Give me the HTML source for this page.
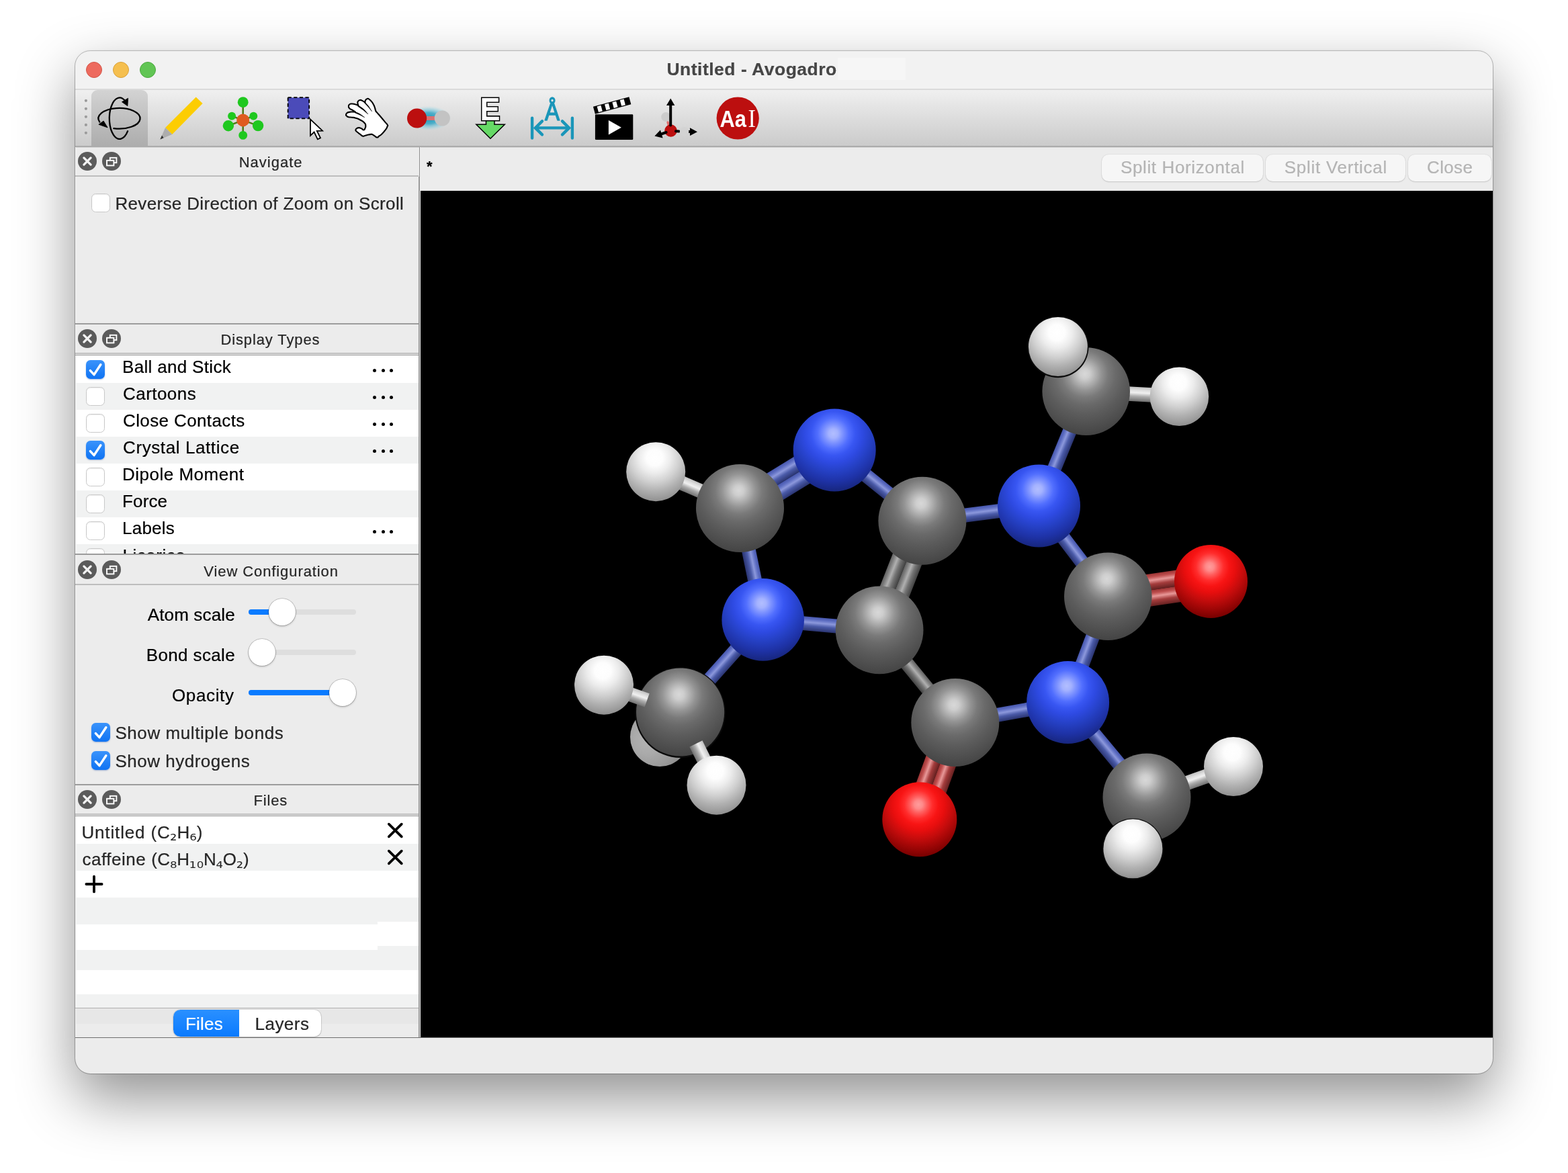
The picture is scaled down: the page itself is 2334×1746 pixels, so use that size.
<!DOCTYPE html>
<html lang="en"><head><meta charset="utf-8"><title>Untitled - Avogadro</title>
<style>
html,body{margin:0;padding:0;background:#fff;}
@media (max-width:1400px) and (min-resolution:1.5dppx){html{zoom:0.5;}}
body{width:2334px;height:1746px;position:relative;overflow:hidden;font-family:"Liberation Sans",sans-serif;}
.abs,.gl,.t,.b{position:absolute;}
svg.abs{will-change:opacity;}
.t{white-space:nowrap;will-change:opacity;-webkit-text-stroke:0.22px currentColor;}
.sb{font-family:"DejaVu Sans","Liberation Sans",sans-serif;font-size:1.0em;position:relative;top:0.13em;margin:0 -0.03em;-webkit-text-stroke:0;}
#win{position:absolute;left:112px;top:75px;width:2110px;height:1523px;border-radius:23px;background:#ececec;
 box-shadow:0 36px 86px 0 rgba(0,0,0,0.44),0 0 3px 0 rgba(0,0,0,0.08);overflow:hidden;}
#ring{position:absolute;left:111px;top:75px;width:2111.5px;height:1523.5px;border-radius:23.5px;box-sizing:border-box;border:1px solid rgba(0,0,0,0.24);}
#win>*{position:absolute;}
#tb{left:0;top:0;width:2110px;height:57px;background:#f2f2f2;border-bottom:2px solid #dadada;}
#tool{left:0;top:59px;width:2110px;height:82.5px;background:linear-gradient(#f0f0f0 0%,#dddddd 50%,#cbcbcb 100%);border-bottom:2px solid #ababab;box-shadow:0 1px 0 #d6d6d6;}
#sel{left:24px;top:59px;width:84px;height:82.5px;border-radius:9px 9px 0 0;background:linear-gradient(#d3d3d3 0%,#c4c4c4 40%,#b4b4b4 80%,#adadad 100%);}
.tl{width:24px;height:24px;border-radius:50%;top:17px;box-sizing:border-box;}
.ln{background:#b4b4b4;}
.hd{left:0;width:511px;background:#ececec;}
.cb{width:28px;height:28px;box-sizing:border-box;border-radius:6.5px;}
.cb.off{background:#fff;border:1px solid #c9c9c9;box-shadow:inset 0 1px 1.5px rgba(0,0,0,0.08);}
.cb.on{background:linear-gradient(#3a93fb,#0f73f3);box-shadow:0 1px 2px rgba(0,60,160,0.35);}
.row{left:2px;width:508px;height:40px;}
.row.a{background:#ffffff;}
.row.b{background:#f1f2f2;}
.trk{height:8px;border-radius:4px;background:#dedede;}
.trk.f{background:#0a7bff;}
.knob{width:40px;height:40px;border-radius:50%;background:#fff;box-shadow:0 0 0 0.8px rgba(0,0,0,0.22),0 1.5px 3px rgba(0,0,0,0.22);}
.btn{top:154.5px;height:40px;border-radius:10.5px;background:#f6f6f6;box-shadow:0 0 0 1px rgba(0,0,0,0.035),0 1px 2px rgba(0,0,0,0.13);}
</style></head><body>
<div id="win"><div id="tb"></div>
<div class="tl" style="left:16px;background:#ed6a5e;border:1px solid #d25548"></div>
<div class="tl" style="left:56px;background:#f5bf4f;border:1px solid #d8a03a"></div>
<div class="tl" style="left:96px;background:#61c554;border:1px solid #4ca83f"></div>
<div style="left:1134.7px;top:11px;width:101px;height:33px;background:#f6f6f6"></div>
<div id="tool"></div><div id="sel"></div>
<div class="btn" style="left:1527.6px;width:240.4px"></div>
<div class="btn" style="left:1772px;width:208px"></div>
<div class="btn" style="left:1984px;width:123.6px"></div>
<div style="left:511px;top:188px;width:2px;height:1281.5px;background:#999999"></div>
<div style="left:511.8px;top:143.5px;width:1.2px;height:45px;background:#8f8f8f"></div>
<div style="left:0px;top:143.5px;width:1.2px;height:1326px;background:#f6f6f6"></div>
<div style="left:512.6px;top:143.5px;width:1.6px;height:65px;background:#f4f4f4"></div>
<svg class="abs" style="left:3px;top:150px" width="72" height="30" viewBox="0 0 72 30">
<circle cx="15" cy="15" r="14" fill="#5b5b5b"/><path d="M9.9 9.9 L20.1 20.1 M20.1 9.9 L9.9 20.1" stroke="#f4f4f4" stroke-width="3.3" stroke-linecap="round"/>
<circle cx="51" cy="15" r="14" fill="#5b5b5b"/>
<rect x="48.8" y="9.8" width="9.6" height="7.4" fill="none" stroke="#fff" stroke-width="1.9"/>
<rect x="44" y="13.8" width="10.4" height="7.6" fill="#5b5b5b" stroke="#fff" stroke-width="1.9"/></svg>
<div class="ln" style="left:0px;top:186px;width:511px;height:2px;background:#bdbdbd"></div>
<div class="cb off" style="left:24.099999999999994px;top:213.10000000000002px"></div>
<div class="ln" style="left:0px;top:406px;width:511px;height:2px;background:#9c9c9c"></div>
<svg class="abs" style="left:3px;top:414px" width="72" height="30" viewBox="0 0 72 30">
<circle cx="15" cy="15" r="14" fill="#5b5b5b"/><path d="M9.9 9.9 L20.1 20.1 M20.1 9.9 L9.9 20.1" stroke="#f4f4f4" stroke-width="3.3" stroke-linecap="round"/>
<circle cx="51" cy="15" r="14" fill="#5b5b5b"/>
<rect x="48.8" y="9.8" width="9.6" height="7.4" fill="none" stroke="#fff" stroke-width="1.9"/>
<rect x="44" y="13.8" width="10.4" height="7.6" fill="#5b5b5b" stroke="#fff" stroke-width="1.9"/></svg>
<div class="ln" style="left:0px;top:450px;width:511px;height:2px;background:#bdbdbd"></div>
<div style="left:1px;top:454px;width:510px;height:295px;background:#fff;overflow:hidden">
<div class="row a" style="position:absolute;left:0;top:1px;width:510px"></div>
<div class="row b" style="position:absolute;left:0;top:41px;width:510px"></div>
<div class="row a" style="position:absolute;left:0;top:81px;width:510px"></div>
<div class="row b" style="position:absolute;left:0;top:121px;width:510px"></div>
<div class="row a" style="position:absolute;left:0;top:161px;width:510px"></div>
<div class="row b" style="position:absolute;left:0;top:201px;width:510px"></div>
<div class="row a" style="position:absolute;left:0;top:241px;width:510px"></div>
<div class="row b" style="position:absolute;left:0;top:281px;width:510px"></div>
</div>
<div style="left:0px;top:452px;width:511px;height:1px;background:#f4f4f4"></div><div style="left:0px;top:453px;width:511px;height:1px;background:#909090"></div>
<div class="cb on" style="left:16px;top:461px"><svg width="28" height="28" viewBox="0 0 28 28" style="display:block"><path d="M6.4 15.6 L12 21.6 L21.8 6.8" fill="none" stroke="#fff" stroke-width="3.5" stroke-linecap="round" stroke-linejoin="round"/></svg></div>
<div style="left:443.29999999999995px;top:473.79999999999995px;width:5px;height:5px;border-radius:50%;background:#000"></div>
<div style="left:455.5px;top:473.79999999999995px;width:5px;height:5px;border-radius:50%;background:#000"></div>
<div style="left:467.70000000000005px;top:473.79999999999995px;width:5px;height:5px;border-radius:50%;background:#000"></div>
<div class="cb off" style="left:16px;top:501px"></div>
<div style="left:443.29999999999995px;top:513.8px;width:5px;height:5px;border-radius:50%;background:#000"></div>
<div style="left:455.5px;top:513.8px;width:5px;height:5px;border-radius:50%;background:#000"></div>
<div style="left:467.70000000000005px;top:513.8px;width:5px;height:5px;border-radius:50%;background:#000"></div>
<div class="cb off" style="left:16px;top:541px"></div>
<div style="left:443.29999999999995px;top:553.8px;width:5px;height:5px;border-radius:50%;background:#000"></div>
<div style="left:455.5px;top:553.8px;width:5px;height:5px;border-radius:50%;background:#000"></div>
<div style="left:467.70000000000005px;top:553.8px;width:5px;height:5px;border-radius:50%;background:#000"></div>
<div class="cb on" style="left:16px;top:581px"><svg width="28" height="28" viewBox="0 0 28 28" style="display:block"><path d="M6.4 15.6 L12 21.6 L21.8 6.8" fill="none" stroke="#fff" stroke-width="3.5" stroke-linecap="round" stroke-linejoin="round"/></svg></div>
<div style="left:443.29999999999995px;top:593.8px;width:5px;height:5px;border-radius:50%;background:#000"></div>
<div style="left:455.5px;top:593.8px;width:5px;height:5px;border-radius:50%;background:#000"></div>
<div style="left:467.70000000000005px;top:593.8px;width:5px;height:5px;border-radius:50%;background:#000"></div>
<div class="cb off" style="left:16px;top:621px"></div>
<div class="cb off" style="left:16px;top:661px"></div>
<div class="cb off" style="left:16px;top:701px"></div>
<div style="left:443.29999999999995px;top:713.8px;width:5px;height:5px;border-radius:50%;background:#000"></div>
<div style="left:455.5px;top:713.8px;width:5px;height:5px;border-radius:50%;background:#000"></div>
<div style="left:467.70000000000005px;top:713.8px;width:5px;height:5px;border-radius:50%;background:#000"></div>
<div style="left:16px;top:741px;width:28px;height:8.2px;overflow:hidden"><div class="cb off" style="position:absolute;left:0;top:0"></div></div>
<div style="left:60px;top:735px;width:200px;height:14.2px;overflow:hidden"><div class="t" id="r8" style="left:10.4px;top:3.6px;font-size:26px;line-height:26px;color:#000;letter-spacing:0.55px">Licorice</div></div>
<div class="ln" style="left:0px;top:749px;width:511px;height:2px;background:#9c9c9c"></div>
<svg class="abs" style="left:3px;top:758px" width="72" height="30" viewBox="0 0 72 30">
<circle cx="15" cy="15" r="14" fill="#5b5b5b"/><path d="M9.9 9.9 L20.1 20.1 M20.1 9.9 L9.9 20.1" stroke="#f4f4f4" stroke-width="3.3" stroke-linecap="round"/>
<circle cx="51" cy="15" r="14" fill="#5b5b5b"/>
<rect x="48.8" y="9.8" width="9.6" height="7.4" fill="none" stroke="#fff" stroke-width="1.9"/>
<rect x="44" y="13.8" width="10.4" height="7.6" fill="#5b5b5b" stroke="#fff" stroke-width="1.9"/></svg>
<div class="ln" style="left:0px;top:794px;width:511px;height:2px;background:#bdbdbd"></div>
<div class="trk" style="left:257.8px;top:832px;width:160.4px"></div>
<div class="trk f" style="left:257.8px;top:832px;width:50.0px"></div>
<div class="knob" style="left:287.8px;top:816px"></div>
<div class="trk" style="left:257.8px;top:892px;width:160.4px"></div>
<div class="knob" style="left:257.8px;top:876px"></div>
<div class="trk" style="left:257.8px;top:952px;width:160.4px"></div>
<div class="trk f" style="left:257.8px;top:952px;width:140.4px"></div>
<div class="knob" style="left:378.2px;top:936px"></div>
<div class="cb on" style="left:24.099999999999994px;top:1001.2px"><svg width="28" height="28" viewBox="0 0 28 28" style="display:block"><path d="M6.4 15.6 L12 21.6 L21.8 6.8" fill="none" stroke="#fff" stroke-width="3.5" stroke-linecap="round" stroke-linejoin="round"/></svg></div>
<div class="cb on" style="left:24.099999999999994px;top:1043.3px"><svg width="28" height="28" viewBox="0 0 28 28" style="display:block"><path d="M6.4 15.6 L12 21.6 L21.8 6.8" fill="none" stroke="#fff" stroke-width="3.5" stroke-linecap="round" stroke-linejoin="round"/></svg></div>
<div class="ln" style="left:0px;top:1092px;width:511px;height:2px;background:#9c9c9c"></div>
<svg class="abs" style="left:3px;top:1100px" width="72" height="30" viewBox="0 0 72 30">
<circle cx="15" cy="15" r="14" fill="#5b5b5b"/><path d="M9.9 9.9 L20.1 20.1 M20.1 9.9 L9.9 20.1" stroke="#f4f4f4" stroke-width="3.3" stroke-linecap="round"/>
<circle cx="51" cy="15" r="14" fill="#5b5b5b"/>
<rect x="48.8" y="9.8" width="9.6" height="7.4" fill="none" stroke="#fff" stroke-width="1.9"/>
<rect x="44" y="13.8" width="10.4" height="7.6" fill="#5b5b5b" stroke="#fff" stroke-width="1.9"/></svg>
<div class="ln" style="left:0px;top:1136px;width:511px;height:2px;background:#bdbdbd"></div>
<div style="left:1px;top:1140px;width:510px;height:285.4px;background:#fff;overflow:hidden">
<div class="row a" style="position:absolute;left:0;top:0.0px;width:510px;height:41.0px"></div>
<div class="row b" style="position:absolute;left:0;top:41.0px;width:510px;height:40.0px"></div>
<div class="row a" style="position:absolute;left:0;top:81.0px;width:510px;height:40.0px"></div>
<div class="row b" style="position:absolute;left:0;top:121.0px;width:510px;height:40.0px"></div>
<div class="row a" style="position:absolute;left:0;top:161.0px;width:510px;height:38.0px"></div>
<div class="row b" style="position:absolute;left:0;top:199.0px;width:510px;height:30.0px"></div>
<div class="row a" style="position:absolute;left:0;top:229.0px;width:510px;height:36.0px"></div>
<div class="row b" style="position:absolute;left:0;top:265.0px;width:510px;height:21.0px"></div>
<div style="position:absolute;left:449px;top:157.0px;width:61px;height:36px;background:#fff"></div>
<div style="position:absolute;left:449px;top:193.0px;width:61px;height:6px;background:#f1f2f2"></div>
</div>
<div style="left:0px;top:1138px;width:511px;height:1px;background:#f4f4f4"></div><div style="left:0px;top:1139px;width:511px;height:1px;background:#909090"></div>
<svg class="abs" style="left:462.79999999999995px;top:1148.3px" width="27" height="26" viewBox="0 0 27 26"><path d="M3.8 3.6 L22.8 22.4 M22.8 3.6 L3.8 22.4" stroke="#000" stroke-width="3.7" stroke-linecap="round"/></svg>
<svg class="abs" style="left:462.79999999999995px;top:1188.3px" width="27" height="26" viewBox="0 0 27 26"><path d="M3.8 3.6 L22.8 22.4 M22.8 3.6 L3.8 22.4" stroke="#000" stroke-width="3.7" stroke-linecap="round"/></svg>
<svg class="abs" style="left:13.300000000000011px;top:1226.4px" width="30" height="30" viewBox="0 0 30 30"><path d="M3.4 15 L26.6 15 M15 3.6 L15 26.4" stroke="#000" stroke-width="3.8" stroke-linecap="round"/></svg>
<div class="ln" style="left:0px;top:1425.2px;width:511px;height:1.2px;background:#b0b0b0"></div>
<div style="left:1px;top:1426.4px;width:510px;height:23px;background:#e7e7e7"></div>
<div style="left:146.2px;top:1428px;width:220.2px;height:40px;border-radius:10.5px;background:#fff;box-shadow:0 0 0 0.8px rgba(0,0,0,0.1),0 1px 2px rgba(0,0,0,0.2)"></div>
<div style="left:146.2px;top:1428px;width:97.8px;height:40px;border-radius:10.5px 0 0 10.5px;background:linear-gradient(#2a90ff,#0a7aff)"></div>
<div style="left:0;top:1469px;width:2110px;height:1px;background:#6e6e6e"></div></div>
<svg class="gl" style="left:626px;top:284px" width="1596" height="1260" viewBox="626 284 1596 1260">
<defs><radialGradient id="gC" cx="0.485" cy="0.3" r="0.7" fx="0.485" fy="0.3"><stop offset="0" stop-color="#d8d8d8"/><stop offset="0.08" stop-color="#cecece"/><stop offset="0.16" stop-color="#b6b6b6"/><stop offset="0.27" stop-color="#949494"/><stop offset="0.38" stop-color="#7a7a7a"/><stop offset="0.5" stop-color="#6a6a6a"/><stop offset="0.66" stop-color="#5c5c5c"/><stop offset="0.83" stop-color="#505050"/><stop offset="1" stop-color="#444444"/></radialGradient><radialGradient id="gN" cx="0.485" cy="0.3" r="0.7" fx="0.485" fy="0.3"><stop offset="0" stop-color="#b2beff"/><stop offset="0.08" stop-color="#a4b2ff"/><stop offset="0.16" stop-color="#7f94ff"/><stop offset="0.27" stop-color="#516efe"/><stop offset="0.38" stop-color="#3856f2"/><stop offset="0.5" stop-color="#2e4ae2"/><stop offset="0.66" stop-color="#2540c4"/><stop offset="0.83" stop-color="#1e32a6"/><stop offset="1" stop-color="#17267e"/></radialGradient><radialGradient id="gO" cx="0.485" cy="0.3" r="0.7" fx="0.485" fy="0.3"><stop offset="0" stop-color="#ff9c9c"/><stop offset="0.08" stop-color="#ff8a8a"/><stop offset="0.16" stop-color="#ff5e5e"/><stop offset="0.27" stop-color="#ff2c2c"/><stop offset="0.38" stop-color="#f81414"/><stop offset="0.5" stop-color="#e80e0e"/><stop offset="0.66" stop-color="#c40c0c"/><stop offset="0.83" stop-color="#9e0606"/><stop offset="1" stop-color="#780000"/></radialGradient><radialGradient id="gH" cx="0.48" cy="0.26" r="0.76" fx="0.48" fy="0.26"><stop offset="0" stop-color="#ffffff"/><stop offset="0.18" stop-color="#fdfdfd"/><stop offset="0.35" stop-color="#ececec"/><stop offset="0.55" stop-color="#d0d0d0"/><stop offset="0.75" stop-color="#b0b0b0"/><stop offset="0.92" stop-color="#989898"/><stop offset="1" stop-color="#8a8a8a"/></radialGradient><radialGradient id="gHd" cx="0.3" cy="0.55" r="0.8" fx="0.3" fy="0.55"><stop offset="0" stop-color="#b4b4b4"/><stop offset="0.3" stop-color="#aaaaaa"/><stop offset="0.6" stop-color="#9a9a9a"/><stop offset="0.88" stop-color="#868686"/><stop offset="1" stop-color="#787878"/></radialGradient><linearGradient id="bb" x1="0" y1="0" x2="0" y2="1"><stop offset="0" stop-color="#4656ac"/><stop offset="0.2" stop-color="#6070c4"/><stop offset="0.4" stop-color="#8c98dc"/><stop offset="0.65" stop-color="#4a5aa8"/><stop offset="1" stop-color="#2a3470"/></linearGradient><linearGradient id="br" x1="0" y1="0" x2="0" y2="1"><stop offset="0" stop-color="#9c3434"/><stop offset="0.2" stop-color="#c05050"/><stop offset="0.4" stop-color="#e89898"/><stop offset="0.65" stop-color="#a43c3c"/><stop offset="1" stop-color="#642020"/></linearGradient><linearGradient id="bg" x1="0" y1="0" x2="0" y2="1"><stop offset="0" stop-color="#606060"/><stop offset="0.2" stop-color="#848484"/><stop offset="0.4" stop-color="#b0b0b0"/><stop offset="0.65" stop-color="#747474"/><stop offset="1" stop-color="#424242"/></linearGradient><linearGradient id="bw" x1="0" y1="0" x2="0" y2="1"><stop offset="0" stop-color="#bebebe"/><stop offset="0.2" stop-color="#dcdcdc"/><stop offset="0.4" stop-color="#f0f0f0"/><stop offset="0.65" stop-color="#acacac"/><stop offset="1" stop-color="#707070"/></linearGradient></defs>
<rect x="626" y="284" width="1596" height="1260" fill="#000"/>
<g transform="translate(976.2,702.2) rotate(23.39)"><rect x="26.4" y="-10.7" width="70.8" height="21.4" fill="url(#bw)"/></g>
<g transform="translate(1101.5,756.4) rotate(-31.58)"><rect x="39.3" y="-23.2" width="89.0" height="23.2" fill="url(#bb)"/><rect x="39.3" y="0.0" width="89.0" height="23.2" fill="url(#bb)"/></g>
<g transform="translate(1242.2,669.9) rotate(38.88)"><rect x="36.9" y="-10.5" width="91.7" height="21" fill="url(#bb)"/></g>
<g transform="translate(1372.9,775.3) rotate(111.44) scale(1,-1)"><rect x="39.3" y="-23.2" width="96.0" height="23.2" fill="url(#bg)"/><rect x="39.3" y="0.0" width="96.0" height="23.2" fill="url(#bg)"/></g>
<g transform="translate(1372.9,775.3) rotate(-7.35)"><rect x="39.3" y="-10.5" width="98.8" height="21" fill="url(#bb)"/></g>
<g transform="translate(1546.5,752.9) rotate(-67.60)"><rect x="36.9" y="-10.5" width="108.1" height="21" fill="url(#bb)"/></g>
<g transform="translate(1546.5,752.9) rotate(52.67)"><rect x="36.9" y="-10.5" width="93.4" height="21" fill="url(#bb)"/></g>
<g transform="translate(1649.3,887.7) rotate(-8.28)"><rect x="39.2" y="-24.0" width="82.9" height="24" fill="url(#br)"/><rect x="39.2" y="0.0" width="82.9" height="24" fill="url(#br)"/></g>
<g transform="translate(1649.3,887.7) rotate(110.72) scale(1,-1)"><rect x="39.2" y="-10.5" width="92.6" height="21" fill="url(#bb)"/></g>
<g transform="translate(1589.6,1045.5) rotate(169.86) scale(1,-1)"><rect x="36.9" y="-10.5" width="94.3" height="21" fill="url(#bb)"/></g>
<g transform="translate(1589.6,1045.5) rotate(50.32)"><rect x="36.9" y="-10.5" width="107.7" height="21" fill="url(#bb)"/></g>
<g transform="translate(1421.8,1075.5) rotate(110.17) scale(1,-1)"><rect x="39.3" y="-23.6" width="81.1" height="23.6" fill="url(#br)"/><rect x="39.3" y="0.0" width="81.1" height="23.6" fill="url(#br)"/></g>
<g transform="translate(1421.8,1075.5) rotate(-129.30) scale(1,-1)"><rect x="39.3" y="-10.5" width="99.4" height="21" fill="url(#bg)"/></g>
<g transform="translate(1309.1,937.8) rotate(-174.92) scale(1,-1)"><rect x="39.2" y="-10.5" width="98.1" height="21" fill="url(#bb)"/></g>
<g transform="translate(1135.7,922.4) rotate(-101.64) scale(1,-1)"><rect x="36.8" y="-10.5" width="93.4" height="21" fill="url(#bb)"/></g>
<g transform="translate(1135.7,922.4) rotate(131.82) scale(1,-1)"><rect x="36.8" y="-10.5" width="108.5" height="21" fill="url(#bb)"/></g>
<g transform="translate(1616.7,582.6) rotate(3.14)"><rect x="39.2" y="-10.7" width="73.4" height="21.4" fill="url(#bw)"/></g>
<g transform="translate(1707.0,1187.0) rotate(-19.63)"><rect x="39.3" y="-10.7" width="71.3" height="21.4" fill="url(#bw)"/></g>
<circle cx="982.0" cy="1097.0" r="44.0" fill="url(#gHd)"/>
<circle cx="976.2" cy="702.2" r="44.0" fill="url(#gH)"/>
<circle cx="1101.5" cy="756.4" r="65.5" fill="url(#gC)"/>
<circle cx="1242.2" cy="669.9" r="61.5" fill="url(#gN)"/>
<circle cx="1372.9" cy="775.3" r="65.5" fill="url(#gC)"/>
<circle cx="1546.5" cy="752.9" r="61.5" fill="url(#gN)"/>
<circle cx="1616.7" cy="582.6" r="65.3" fill="url(#gC)"/>
<circle cx="1755.4" cy="590.2" r="43.8" fill="url(#gH)"/>
<circle cx="1574.9" cy="516.6" r="45.6" fill="#0a0a0a"/>
<circle cx="1574.9" cy="516.0" r="44.0" fill="url(#gH)"/>
<circle cx="1649.3" cy="887.7" r="65.3" fill="url(#gC)"/>
<circle cx="1802.5" cy="865.4" r="54.5" fill="url(#gO)"/>
<circle cx="1589.6" cy="1045.5" r="61.5" fill="url(#gN)"/>
<circle cx="1421.8" cy="1075.5" r="65.5" fill="url(#gC)"/>
<circle cx="1368.8" cy="1219.8" r="55.5" fill="url(#gO)"/>
<circle cx="1309.1" cy="937.8" r="65.4" fill="url(#gC)"/>
<circle cx="1135.7" cy="922.4" r="61.3" fill="url(#gN)"/>
<circle cx="1012.6" cy="1060.6" r="67.39999999999999" fill="#0a0a0a"/>
<circle cx="1012.6" cy="1060.0" r="65.6" fill="url(#gC)"/>
<g transform="translate(1012.6,1060.0) rotate(-160.47) scale(1,-1)"><rect x="52.5" y="-10.7" width="41.7" height="21.4" fill="url(#bw)"/></g>
<g transform="translate(1012.6,1060.0) rotate(63.63)"><rect x="52.5" y="-10.7" width="42.4" height="21.4" fill="url(#bw)"/></g>
<circle cx="899.0" cy="1019.7" r="44.0" fill="url(#gH)"/>
<circle cx="1066.5" cy="1168.7" r="44.0" fill="url(#gH)"/>
<circle cx="1707.0" cy="1187.0" r="65.5" fill="url(#gC)"/>
<circle cx="1836.0" cy="1141.0" r="44.0" fill="url(#gH)"/>
<circle cx="1686.4" cy="1263.8999999999999" r="45.6" fill="#0a0a0a"/>
<circle cx="1686.4" cy="1263.3" r="44.0" fill="url(#gH)"/>
</svg>
<svg class="abs" style="left:112px;top:133px" width="1100" height="86" viewBox="112 133 1100 86">
<defs>
<radialGradient id="halo" cx="0.5" cy="0.5" r="0.5"><stop offset="0" stop-color="#1792b4" stop-opacity="0.95"/><stop offset="0.45" stop-color="#2aa3c4" stop-opacity="0.8"/><stop offset="0.8" stop-color="#7fcde0" stop-opacity="0.35"/><stop offset="1" stop-color="#bfe6ef" stop-opacity="0"/></radialGradient>
</defs>
<circle cx="127.9" cy="149.8" r="2.1" fill="#9b9b9b"/>
<circle cx="127.9" cy="161.8" r="2.1" fill="#9b9b9b"/>
<circle cx="127.9" cy="173.8" r="2.1" fill="#9b9b9b"/>
<circle cx="127.9" cy="185.9" r="2.1" fill="#9b9b9b"/>
<circle cx="127.9" cy="197.8" r="2.1" fill="#9b9b9b"/>
<g fill="none" stroke="#000" stroke-width="2.3" stroke-linecap="round">
<path d="M169.35 191.1 A31.05 15.35 0 1 0 148.3 181.5"/>
<path d="M190.1 195.2 A15.3 30.7 0 1 1 186.5 150.5"/>
</g>
<path d="M190.6 146.15 L181.4 151.7 L189.9 157.75 Z" fill="#000" stroke="#000" stroke-width="0.8" stroke-linejoin="round"/>
<path d="M154.1 180 L146.9 185.3 L160.2 189.9 Z" fill="#000" stroke="#000" stroke-width="0.8" stroke-linejoin="round"/>
<path d="M291.7 144.5 L301.6 154 L256.3 200 L246.1 190 Z" fill="#fccd02"/>
<path d="M246.1 190 L256.3 200 L238.4 207.5 Z" fill="#adadad"/>
<path d="M241 201.4 L243.6 205.3 L238.4 207.5 Z" fill="#333"/>
<g stroke="#4f7d19" stroke-width="2.6">
<line x1="361.7" y1="178.9" x2="361.7" y2="152.2"/><line x1="361.7" y1="178.9" x2="361.7" y2="201.4"/>
<line x1="361.7" y1="178.9" x2="339.9" y2="187.3"/><line x1="361.7" y1="178.9" x2="384.1" y2="187.1"/>
<line x1="361.7" y1="178.9" x2="345.1" y2="172.7"/><line x1="361.7" y1="178.9" x2="377.3" y2="172.7"/></g>
<g fill="#1fc81f"><circle cx="361.7" cy="152.2" r="7.9"/><circle cx="361.7" cy="201.4" r="6.4"/>
<circle cx="339.9" cy="187.3" r="8.2"/><circle cx="384.1" cy="187.1" r="8.2"/>
<circle cx="345.1" cy="172.7" r="6"/><circle cx="377.3" cy="172.7" r="6"/></g>
<circle cx="361.7" cy="178.9" r="9.5" fill="#df5b20"/>
<rect x="428.6" y="145.2" width="31.6" height="31.2" fill="#4b4bb9" stroke="#000" stroke-width="1.8" stroke-dasharray="5.2 3.4"/>
<path d="M462 177.6 L462 202 L467.6 196.6 L472.8 207.4 L477 205.3 L471.8 194.8 L480 194.6 Z" fill="#fff" stroke="#000" stroke-width="1.8" stroke-linejoin="miter"/>
<path d="M529.47 193.22 C529.76 192.03 529.31 192.35 530.89 191.32 C532.48 190.29 531.84 190.13 534.22 190.13 C536.59 190.13 535.64 190.21 538.01 191.32 C540.39 192.43 539.60 193.46 541.34 193.46 C543.08 193.46 542.25 193.46 543.23 191.32 C544.22 189.19 544.60 189.90 544.28 187.05 C543.96 184.20 544.85 185.55 542.29 182.78 C539.72 180.01 540.86 181.09 536.59 178.74 C532.32 176.40 533.74 177.10 529.47 175.75 C525.20 174.41 527.26 175.22 523.78 174.71 C520.29 174.20 521.64 174.95 519.03 174.23 C516.42 173.52 517.24 173.76 515.94 172.57 C514.65 171.39 514.98 172.10 515.14 170.68 C515.30 169.25 514.80 169.57 516.42 168.30 C518.03 167.04 517.21 167.46 519.98 166.88 C522.75 166.29 521.72 166.59 524.72 166.55 C527.73 166.50 527.57 166.67 529.00 166.74 C527.57 165.75 527.57 165.57 524.72 163.79 C521.88 162.02 522.38 163.24 520.45 161.42 C518.52 159.60 519.01 160.31 518.93 158.33 C518.85 156.36 518.60 156.77 520.22 155.49 C521.83 154.21 521.01 154.54 523.78 154.49 C526.54 154.44 525.28 154.43 528.52 155.34 C531.76 156.26 531.84 156.61 533.51 157.24 C533.14 155.95 532.49 155.60 532.41 153.35 C532.33 151.10 532.03 151.96 533.27 150.50 C534.50 149.05 534.14 149.21 536.12 148.98 C538.09 148.76 536.75 148.62 539.20 149.84 C541.65 151.06 542.05 151.71 543.47 152.64 C543.68 151.48 542.93 151.09 544.09 149.17 C545.24 147.26 545.09 147.31 546.94 146.90 C548.79 146.49 547.55 146.42 549.64 147.94 C551.73 149.46 551.07 148.86 553.20 151.45 C555.34 154.05 554.47 152.72 556.05 155.72 C557.63 158.73 556.87 157.37 557.95 160.47 C559.02 163.57 558.25 162.73 559.28 165.03 C560.31 167.32 558.31 164.13 561.03 167.35 C563.75 170.58 563.41 169.96 567.44 174.71 C571.48 179.46 570.05 177.87 573.14 181.59 C576.22 185.31 575.59 183.57 576.70 185.86 C577.80 188.16 577.33 186.18 576.46 188.47 C575.59 190.77 576.62 189.26 574.09 192.75 C571.55 196.23 572.19 195.59 568.86 198.92 C565.54 202.24 566.57 200.85 564.12 202.71 C561.67 204.58 563.56 204.52 561.51 204.52 C559.45 204.52 560.24 204.10 557.95 202.71 C555.65 201.32 556.45 201.29 554.63 200.34 C552.81 199.39 554.55 199.79 552.49 199.86 C550.43 199.94 551.38 199.94 548.46 200.58 C545.53 201.21 546.48 201.08 543.71 201.76 C540.94 202.44 542.68 203.25 540.15 202.62 C537.62 201.98 538.73 201.73 536.12 199.86 C533.51 198.00 534.34 198.68 532.32 197.02 C530.29 195.36 530.99 196.15 530.04 194.88 C529.09 193.62 529.19 194.41 529.47 193.22 Z" fill="#fff" stroke="#000" stroke-width="2.1" stroke-linejoin="round"/>
<path d="M529.28 166.74 Q535.34 168.29 542.70 174.76 Q534.22 170.22 528.50 168.09 Z M533.66 157.10 Q542.15 161.76 547.92 169.93 Q540.69 163.43 532.64 158.27 Z M543.72 152.56 Q549.40 157.72 553.62 165.87 Q547.94 158.83 542.69 153.34 Z" fill="#000" stroke="#000" stroke-width="0.5" stroke-linejoin="round"/>
<ellipse cx="638" cy="176" rx="33.5" ry="18.6" fill="url(#halo)"/>
<rect x="620" y="173" width="40" height="6" fill="#db7171"/>
<circle cx="658.3" cy="176" r="11.6" fill="#c3c3c3"/>
<circle cx="620.6" cy="176" r="14.6" fill="#bc0f0f"/>
<path d="M723.5 179 L736 179 L736 185.2 L751.3 185.2 L730 206.2 L708.9 185.2 L723.5 185.2 Z" fill="#66d966" stroke="#000" stroke-width="1.5" stroke-linejoin="miter"/>
<text x="714.4" y="179" font-family="Liberation Sans, sans-serif" font-weight="bold" font-size="47.6" textLength="30" lengthAdjust="spacingAndGlyphs" fill="#fff" stroke="#000" stroke-width="3.2" stroke-linejoin="miter" paint-order="stroke">E</text>
<g fill="none" stroke="#1a96b9" stroke-width="4.4" stroke-linecap="round">
<line x1="792.1" y1="175.7" x2="792.1" y2="205.6"/><line x1="851.9" y1="175.7" x2="851.9" y2="205.6"/>
<line x1="797.5" y1="190.4" x2="846.5" y2="190.4"/>
<path d="M807 180.4 L796.9 190.4 L807 200.4"/><path d="M837 180.4 L847.1 190.4 L837 200.4"/></g>
<text x="811" y="178.6" font-family="Liberation Sans, sans-serif" font-size="39.5" textLength="22" lengthAdjust="spacingAndGlyphs" fill="#1a96b9" stroke="#1a96b9" stroke-width="1.5" stroke-linejoin="round">Å</text>
<rect x="885.9" y="170.3" width="56.4" height="37.6" rx="1.2" fill="#000"/>
<path d="M905.9 179.1 L905.9 200.5 L924.9 189.7 Z" fill="#fff"/>
<g transform="translate(882.9,158.7) rotate(-15.2)"><rect x="0" y="0" width="55.4" height="11.4" fill="#000"/>
<g fill="#fff"><rect x="5.6" y="1.2" width="6" height="9"/><rect x="17.4" y="1.2" width="6" height="9"/><rect x="29.2" y="1.2" width="6" height="9"/><rect x="41" y="1.2" width="6" height="9"/></g></g>
<circle cx="991.2" cy="174.1" r="7" fill="#c9c9c9" opacity="0.85"/>
<line x1="994" y1="182" x2="996.5" y2="190" stroke="#e26f6f" stroke-width="3.4" stroke-linecap="round"/>
<circle cx="998.5" cy="194.5" r="9.3" fill="#bc0f0f"/>
<g stroke="#000" stroke-width="4" stroke-linecap="round" fill="none">
<line x1="998.2" y1="156" x2="998.2" y2="186.5"/>
<line x1="1006" y1="195.3" x2="1010.5" y2="195.6"/><line x1="1025" y1="196" x2="1029" y2="196.1"/>
<line x1="991.6" y1="197" x2="984" y2="199.6"/></g>
<circle cx="1018.6" cy="195.8" r="6.8" fill="#d3d3d3"/>
<path d="M998.2 146.6 L1004.4 157 L992 157 Z" fill="#000"/>
<path d="M1038 196.2 L1027 202 L1027 190.2 Z" fill="#000"/>
<path d="M974.4 202.4 L983 193.4 L986.6 205.4 Z" fill="#000"/>
<circle cx="1098.2" cy="176" r="31.6" fill="#bc0f0f"/>
<text y="189" fill="#fff" font-size="35"><tspan x="1071.6" font-family="Liberation Sans, sans-serif" font-weight="bold" font-size="35" textLength="39.4" lengthAdjust="spacingAndGlyphs">Aa</tspan><tspan x="1113.4" font-family="Liberation Serif, serif" font-size="37" textLength="11.4" lengthAdjust="spacingAndGlyphs">I</tspan></text>
</svg>
<div class="t" id="star" style="left:634.9px;top:236.8px;font-size:22px;line-height:22px;color:#000;font-weight:700;">*</div>
<div class="t" id="title" style="left:992.40px;top:89.67px;font-size:26.5px;line-height:26.5px;font-weight:700;color:#464646;letter-spacing:0.500px">Untitled - Avogadro</div>
<div class="t" id="h_nav" style="left:355.70px;top:231.18px;font-size:22px;line-height:22px;font-weight:400;color:#262626;letter-spacing:1.000px">Navigate</div>
<div class="t" id="rev" style="left:171.40px;top:289.99px;font-size:26px;line-height:26px;font-weight:400;color:#262626;letter-spacing:0.347px">Reverse Direction of Zoom on Scroll</div>
<div class="t" id="h_dt" style="left:328.40px;top:495.38px;font-size:22px;line-height:22px;font-weight:400;color:#262626;letter-spacing:0.883px">Display Types</div>
<div class="t" id="r1" style="left:182.00px;top:533.39px;font-size:26px;line-height:26px;font-weight:400;color:#000;letter-spacing:0.323px">Ball and Stick</div>
<div class="t" id="r2" style="left:183.00px;top:573.39px;font-size:26px;line-height:26px;font-weight:400;color:#000;letter-spacing:0.457px">Cartoons</div>
<div class="t" id="r3" style="left:183.00px;top:613.39px;font-size:26px;line-height:26px;font-weight:400;color:#000;letter-spacing:0.385px">Close Contacts</div>
<div class="t" id="r4" style="left:183.00px;top:653.39px;font-size:26px;line-height:26px;font-weight:400;color:#000;letter-spacing:0.600px">Crystal Lattice</div>
<div class="t" id="r5" style="left:182.00px;top:693.39px;font-size:26px;line-height:26px;font-weight:400;color:#000;letter-spacing:0.500px">Dipole Moment</div>
<div class="t" id="r6" style="left:182.00px;top:733.39px;font-size:26px;line-height:26px;font-weight:400;color:#000;letter-spacing:0.150px">Force</div>
<div class="t" id="r7" style="left:182.00px;top:773.39px;font-size:26px;line-height:26px;font-weight:400;color:#000;letter-spacing:0.240px">Labels</div>
<div class="t" id="h_vc" style="left:303.30px;top:839.88px;font-size:22px;line-height:22px;font-weight:400;color:#262626;letter-spacing:0.906px">View Configuration</div>
<div class="t" id="atom" style="left:219.70px;top:901.59px;font-size:26px;line-height:26px;font-weight:400;color:#000;letter-spacing:0.156px">Atom scale</div>
<div class="t" id="bond" style="left:217.70px;top:961.79px;font-size:26px;line-height:26px;font-weight:400;color:#000;letter-spacing:0.378px">Bond scale</div>
<div class="t" id="opac" style="left:256.00px;top:1021.59px;font-size:26px;line-height:26px;font-weight:400;color:#000;letter-spacing:0.633px">Opacity</div>
<div class="t" id="smb" style="left:171.40px;top:1077.89px;font-size:26px;line-height:26px;font-weight:400;color:#262626;letter-spacing:0.578px">Show multiple bonds</div>
<div class="t" id="shy" style="left:171.40px;top:1119.69px;font-size:26px;line-height:26px;font-weight:400;color:#262626;letter-spacing:0.508px">Show hydrogens</div>
<div class="t" id="h_fl" style="left:377.50px;top:1181.18px;font-size:22px;line-height:22px;font-weight:400;color:#262626;letter-spacing:0.850px">Files</div>
<div class="t" id="f1" style="left:121.40px;top:1225.59px;font-size:26px;line-height:26px;font-weight:400;color:#262626;letter-spacing:0.857px">Untitled (C<span class="sb">₂</span>H<span class="sb">₆</span>)</div>
<div class="t" id="f2" style="left:122.40px;top:1266.19px;font-size:26px;line-height:26px;font-weight:400;color:#262626;letter-spacing:0.547px">caffeine (C<span class="sb">₈</span>H<span class="sb">₁₀</span>N<span class="sb">₄</span>O<span class="sb">₂</span>)</div>
<div class="t" id="tfiles" style="left:275.90px;top:1511.49px;font-size:26px;line-height:26px;font-weight:400;color:#fff;letter-spacing:0.250px">Files</div>
<div class="t" id="tlayers" style="left:379.50px;top:1511.49px;font-size:26px;line-height:26px;font-weight:400;color:#262626;letter-spacing:0.480px">Layers</div>
<div class="t" id="bsh" style="left:1668.00px;top:236.29px;font-size:26px;line-height:26px;font-weight:400;color:#b4b4b4;letter-spacing:0.627px">Split Horizontal</div>
<div class="t" id="bsv" style="left:1911.80px;top:236.29px;font-size:26px;line-height:26px;font-weight:400;color:#b4b4b4;letter-spacing:0.723px">Split Vertical</div>
<div class="t" id="bcl" style="left:2124.00px;top:236.29px;font-size:26px;line-height:26px;font-weight:400;color:#b4b4b4;letter-spacing:0.350px">Close</div>
<div id="ring"></div>
</body></html>
